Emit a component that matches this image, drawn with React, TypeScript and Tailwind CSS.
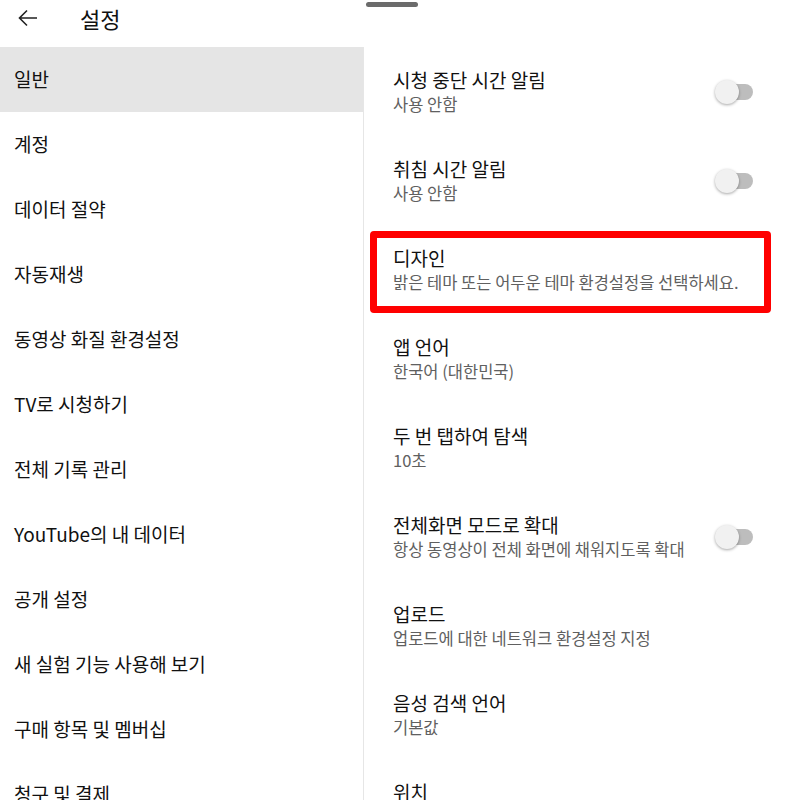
import React from "react";

const leftItems = [
  "일반",
  "계정",
  "데이터 절약",
  "자동재생",
  "동영상 화질 환경설정",
  "TV로 시청하기",
  "전체 기록 관리",
  "YouTube의 내 데이터",
  "공개 설정",
  "새 실험 기능 사용해 보기",
  "구매 항목 및 멤버십",
  "청구 및 결제",
];

type Item = { title: string; sub?: string; toggle?: boolean; boxed?: boolean };

const rightItems: Item[] = [
  { title: "시청 중단 시간 알림", sub: "사용 안함", toggle: true },
  { title: "취침 시간 알림", sub: "사용 안함", toggle: true },
  { title: "디자인", sub: "밝은 테마 또는 어두운 테마 환경설정을 선택하세요.", boxed: true },
  { title: "앱 언어", sub: "한국어 (대한민국)" },
  { title: "두 번 탭하여 탐색", sub: "10초" },
  { title: "전체화면 모드로 확대", sub: "항상 동영상이 전체 화면에 채워지도록 확대", toggle: true },
  { title: "업로드", sub: "업로드에 대한 네트워크 환경설정 지정" },
  { title: "음성 검색 언어", sub: "기본값" },
  { title: "위치", sub: "대한민국" },
];

function Toggle() {
  return (
    <div className="relative w-[38px] h-[24px] shrink-0">
      <div className="absolute left-[12px] top-[4px] w-[26px] h-[16px] rounded-full bg-[#bdbdbd]" />
      <div className="absolute left-0 top-0 w-[24px] h-[24px] rounded-full bg-[#f1f1f1] shadow-[0_1px_3px_rgba(0,0,0,0.35)]" />
    </div>
  );
}

export default function App() {
  return (
    <div
      className="w-[800px] h-[800px] overflow-hidden bg-white relative"
      style={{ fontFamily: '"Noto Sans CJK KR", "Noto Sans", sans-serif' }}
    >
      <div className="absolute left-[366px] top-[2px] w-[52px] h-[5px] rounded-full bg-[#6b6b6b]" />
      <div className="flex h-full">
        <div className="w-[363px] shrink-0 flex flex-col">
          <div className="h-[47px] shrink-0 flex items-start">
            <div className="h-[36px] flex items-center">
              <svg width="24" height="24" viewBox="0 0 24 24" className="ml-[16px]" fill="none" stroke="#222" strokeWidth="1.6">
                <path d="M21 12H3.5M11 4.5L3.5 12l7.5 7.5" />
              </svg>
              <span className="ml-[40px] text-[22px] text-[#111] leading-none">설정</span>
            </div>
          </div>
          {leftItems.map((t, i) => (
            <div
              key={t}
              className={`h-[65px] shrink-0 flex items-center pl-[14px] text-[19px] text-[#111] ${i === 0 ? "bg-[#e5e5e5]" : ""}`}
            >
              {t}
            </div>
          ))}
        </div>
        <div className="flex-1 flex flex-col border-l border-[#e6e6e6] mt-[47px]">
          {rightItems.map((it) => (
            <div key={it.title} className="relative h-[89px] shrink-0 flex items-center pl-[29px] pr-[47px]">
              <div className="flex-1 flex flex-col">
                <div className="text-[19px] leading-[25px] text-[#111]">{it.title}</div>
                {it.sub && <div className="text-[16.5px] leading-[25px] text-[#606060]">{it.sub}</div>}
              </div>
              {it.toggle && <Toggle />}
              {it.boxed && (
                <div className="absolute left-[6px] top-[6px] w-[401px] h-[82px] border-[7px] border-[#ff0000] rounded-[4px]" />
              )}
            </div>
          ))}
        </div>
      </div>
    </div>
  );
}
